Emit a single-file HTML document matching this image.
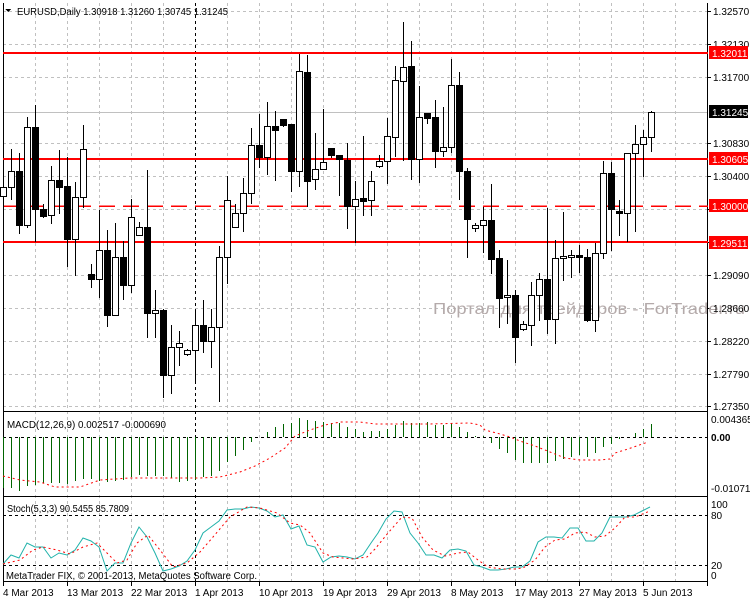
<!DOCTYPE html>
<html><head><meta charset="utf-8"><style>
html,body{margin:0;padding:0;background:#fff;width:750px;height:600px;overflow:hidden}
svg{display:block}
text{font-family:"Liberation Sans",sans-serif;font-size:10px;fill:#000}
</style></head><body>
<svg id="s" width="750" height="600" xmlns="http://www.w3.org/2000/svg" shape-rendering="crispEdges">
<rect width="750" height="600" fill="#fff"/>
<g id="grid"></g>
<text x="433" y="314" textLength="312" lengthAdjust="spacingAndGlyphs" style="font-size:16px;fill:#b4aaaa">Портал для трейдеров - ForTrader.ru</text>
<g id="lv"></g>
<g id="cd"></g>
<g id="ind"></g>
<polygon points="5,9 11,9 8,12" fill="#000"/>
<text x="17" y="15" textLength="211" lengthAdjust="spacingAndGlyphs">EURUSD,Daily  1.30918 1.31260 1.30745 1.31245</text>
<text x="7" y="428" textLength="159" lengthAdjust="spacingAndGlyphs">MACD(12,26,9) 0.002517 -0.000690</text>
<text x="7" y="512" textLength="122" lengthAdjust="spacingAndGlyphs">Stoch(5,3,3) 90.5455 85.7809</text>
<text x="6" y="579" textLength="251" lengthAdjust="spacingAndGlyphs">MetaTrader FIX, © 2001-2013, MetaQuotes Software Corp.</text>
<g id="ax">
<text x="713" y="15">1.32570</text>
<text x="713" y="48">1.32130</text>
<text x="713" y="81">1.31700</text>
<text x="713" y="147">1.30830</text>
<text x="713" y="180">1.30400</text>
<text x="713" y="279">1.29090</text>
<text x="713" y="312">1.28660</text>
<text x="713" y="345">1.28220</text>
<text x="713" y="378">1.27790</text>
<text x="713" y="410">1.27350</text>
<rect x="709" y="46" width="39" height="13" fill="#ff0000"/><text x="712" y="57" style="fill:#fff">1.32011</text>
<rect x="709" y="105" width="39" height="13" fill="#000"/><text x="712" y="116" style="fill:#fff">1.31245</text>
<rect x="709" y="152" width="39" height="13" fill="#ff0000"/><text x="712" y="163" style="fill:#fff">1.30605</text>
<rect x="709" y="199" width="39" height="13" fill="#ff0000"/><text x="712" y="210" style="fill:#fff">1.30000</text>
<rect x="709" y="236" width="39" height="13" fill="#ff0000"/><text x="712" y="247" style="fill:#fff">1.29511</text>
<text x="711" y="423">0.004365</text>
<text x="711" y="441" style="font-weight:bold">0.00</text>
<text x="711" y="492">-0.010714</text>
<text x="711" y="508">100</text>
<text x="711" y="519">80</text>
<text x="711" y="569">20</text>
<text x="711" y="579">0</text>
</g>
<g>
<text x="3" y="596">4 Mar 2013</text>
<text x="67" y="596">13 Mar 2013</text>
<text x="131" y="596">22 Mar 2013</text>
<text x="195" y="596">1 Apr 2013</text>
<text x="259" y="596">10 Apr 2013</text>
<text x="323" y="596">19 Apr 2013</text>
<text x="387" y="596">29 Apr 2013</text>
<text x="451" y="596">8 May 2013</text>
<text x="515" y="596">17 May 2013</text>
<text x="579" y="596">27 May 2013</text>
<text x="643" y="596">5 Jun 2013</text>
</g>
</svg>
<script>
var NS="http://www.w3.org/2000/svg";
function el(p,t,a){var e=document.createElementNS(NS,t);for(var k in a)e.setAttribute(k,a[k]);document.getElementById(p).appendChild(e);return e;}
function ln(p,x1,y1,x2,y2,c,w,d){var a={x1:x1,y1:y1,x2:x2,y2:y2,stroke:c,"stroke-width":w||1};if(d)a["stroke-dasharray"]=d;return el(p,"line",a);}
[11,44,77,143,176,209,242,275,308,341,374,406].forEach(function(y){ln("grid",3,y+.5,708,y+.5,"#c0c0c0",1,"3,3");});
ln("grid",3,112.5,708,112.5,"#c0c0c0",1);
for(var x=35;x<708;x+=32){var blk=(x==195||x==403||x==619);
 ln("grid",x+.5,3,x+.5,582,blk?"#000":"#c0c0c0",1,"3,3");}
ln("grid",3.5,3,3.5,582,"#000");ln("grid",707.5,3,707.5,582,"#000");
ln("grid",3,411.5,708,411.5,"#000");
ln("grid",3,496.5,708,496.5,"#000");
ln("grid",3,581.5,708,581.5,"#000");
for(var x=3;x<708;x+=64){ln("grid",x+.5,582,x+.5,586,"#000");}
[11,44,77,143,176,209,242,275,308,341,374,406].forEach(function(y){ln("grid",708,y+.5,711,y+.5,"#000");});
ln("lv",3,53,708,53,"#ff0000",2);ln("lv",3,159,708,159,"#ff0000",2);ln("lv",3,242,708,242,"#ff0000",2);
ln("lv",3,206,708,206,"#ff0000",1.5,"16,8");
ln("grid",3,437.5,708,437.5,"#000",1,"3,3");
ln("grid",3,515.5,708,515.5,"#000",1,"3,3");ln("grid",3,565.5,708,565.5,"#000",1,"3,3");
var C=[[183,221,187,196,0],[149,199,171,187,0],[153,233,171,225,1],[117,227,127,225,0],[105,241,127,209,1],[204,217,209,216,1],[166,223,180,215,0],[150,213,180,187,1],[157,266,186,239,1],[182,275,197,239,0],[125,207,149,197,0],[264,287,274,279,1],[210,297,250,279,0],[230,326,250,315,1],[223,315,257,315,0],[241,299,257,285,1],[199,292,217,285,0],[222,235,227,235,0],[170,337,227,313,1],[290,337,310,313,0],[309,397,310,375,1],[325,393,347,375,0],[331,365,343,347,0],[349,355,350,354,0],[309,383,325,350,0],[300,352,325,341,1],[309,367,327,341,0],[246,401,257,327,0],[176,283,200,257,0],[204,227,213,227,0],
[178,231,193,213,0],[128,203,145,193,0],[114,167,145,157,1],[102,174,126,157,0],[111,180,126,130,1],[119,126,119,125,1],[124,191,124,171,1],[54,186,71,171,0],[55,206,72,181,1],[133,189,169,179,0],[109,169,162,169,0],[148,157,148,155,1],[155,195,155,159,1],[143,228,160,206,1],[181,242,199,206,0],[136,215,198,201,1],[171,215,181,200,0],[155,167,161,166,0],[118,183,136,161,0],[66,156,80,137,0],[22,160,67,81,0],[41,179,66,159,1],[86,182,117,159,0],[113,123,113,118,1],[100,167,117,151,1],[107,156,147,151,0],[59,152,85,147,0],[72,199,85,171,1],[168,257,171,219,1],[223,231,225,228,0],[207,252,220,225,0],[184,273,220,259,1],[250,327,258,298,1],[260,323,295,297,0],[290,362,295,337,1],[321,330,324,329,0],[282,345,295,325,0],[273,320,279,295,0],[208,333,279,319,1],[240,343,258,319,0],[212,280,256,258,0],[250,277,255,257,0],[245,272,255,257,1],[249,321,257,320,1],[243,331,253,320,0],[161,258,173,253,0],[162,250,173,209,1],[200,235,211,213,1],[159,241,153,213,0],[125,231,144,153,0],[130,176,137,144,0],[111,151,112,137,0]];
C.forEach(function(c,i){var x=3+8*i;
 ln("cd",x+.5,c[0],x+.5,c[1]+1,"#000");
 var h=Math.max(c[3]-c[2],1);
 if(c[4]) el("cd","rect",{x:x-3,y:c[2],width:7,height:h+1,fill:"#000"});
 else el("cd","rect",{x:x-2.5,y:c[2]+.5,width:6,height:h,fill:"#fff",stroke:"#000","stroke-width":1});
});
var M=[488,488,491,486,485,483,483,483,484,481,479,479,481,482,481,480,477,475,476,476,476,478,482,481,480,477,476,471,462,456,450,442,437,432,427,424,423,418,420,421,422,423,423,427,429,432,431,431,429,425,421,423,423,422,425,425,423,427,432,436,436,443,449,453,460,463,463,463,463,461,459,457,455,457,453,447,444,439,437,433,429,424];
M.forEach(function(y,i){var x=3+8*i;if(Math.abs(y-437)<1)return;
 el("ind","rect",{x:x,y:Math.min(y,437),width:1,height:Math.abs(y-437),fill:"#006400"});});
function pl(pts,c,d,w){el("ind","polyline",{points:pts.map(function(p){return p.join(",")}).join(" "),fill:"none",stroke:c,"stroke-width":w||1,"stroke-dasharray":d||"none","shape-rendering":"auto"});}
pl([[3,476],[20,480],[40,482],[55,487],[80,487],[100,480],[130,478],[200,478],[220,477],[240,472],[255,466],[270,458],[285,448],[295,436],[310,430],[325,425],[340,422],[360,422],[375,424],[430,424],[470,423],[480,425],[485,430],[500,434],[510,437],[520,441],[535,446],[550,452],[565,458],[580,460],[600,460],[610,459],[615,453],[628,449],[648,442]],"#ff0000","2,3");
pl([[3,564],[11,555],[19,558],[27,543],[35,547],[43,547],[51,558],[59,553],[67,555],[75,550],[83,538],[91,541],[99,547],[107,571],[115,563],[123,563],[131,543],[139,527],[147,537],[155,553],[163,571],[171,569],[179,566],[187,561],[195,550],[203,533],[211,527],[219,521],[227,510],[235,509],[243,509],[251,507],[259,508],[267,511],[275,517],[283,515],[291,529],[299,526],[307,545],[315,547],[323,562],[331,557],[339,556],[347,557],[355,559],[363,555],[371,543],[378,533],[386,519],[394,511],[402,512],[410,533],[418,543],[426,555],[434,555],[442,558],[450,550],[458,549],[466,551],[474,565],[482,567],[490,570],[498,570],[506,569],[514,567],[522,567],[530,561],[538,542],[546,537],[554,537],[562,538],[570,528],[578,528],[586,541],[594,541],[602,533],[610,517],[618,517],[626,517],[634,515],[642,511],[650,507]],"#20b2aa");
pl([[3,564],[20,560],[33,550],[43,547],[57,550],[70,554],[83,547],[97,543],[107,553],[117,563],[127,560],[137,543],[148,535],[160,550],[173,567],[187,563],[200,552],[213,537],[230,517],[247,507],[260,508],[277,513],[290,523],[300,525],[310,533],[323,553],[333,557],[353,559],[367,557],[375,549],[388,533],[402,517],[412,518],[422,537],[433,550],[445,556],[458,553],[468,552],[478,560],[488,567],[502,569],[515,569],[523,568],[535,560],[545,547],[555,540],[565,539],[575,533],[585,532],[595,537],[605,536],[615,528],[625,517],[635,517],[645,513],[650,511]],"#ff0000","2,3");
</script>
</body></html>
